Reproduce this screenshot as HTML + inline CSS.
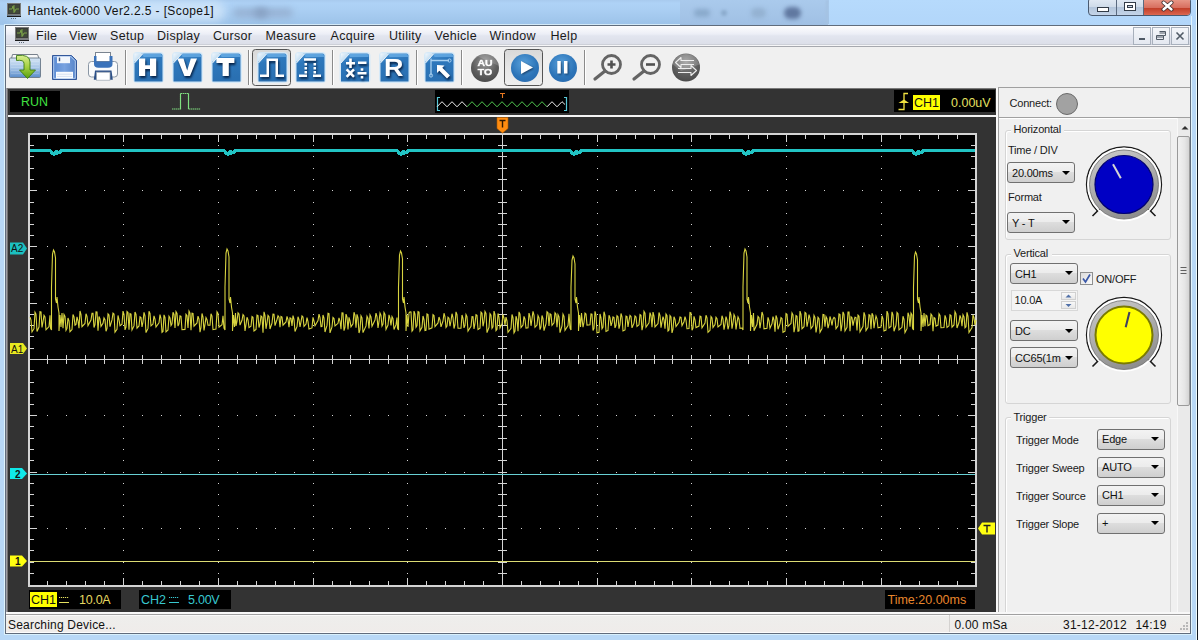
<!DOCTYPE html>
<html><head><meta charset="utf-8">
<style>
*{box-sizing:border-box}
html,body{margin:0;padding:0}
body{width:1198px;height:640px;overflow:hidden;position:relative;background:#bad3ec;font-family:"Liberation Sans",sans-serif;font-size:12px;color:#000}
.a{position:absolute}
.t{position:absolute;white-space:nowrap;line-height:1}
.m{position:absolute;white-space:nowrap;line-height:1;top:29.7px;font-size:12.5px;letter-spacing:0.3px;color:#1a1a1a}
.p{position:absolute;white-space:nowrap;line-height:1;font-size:11px;letter-spacing:-0.2px;color:#1a1a1a}
.cb{position:absolute;height:21px;border:1px solid #707070;border-radius:3px;background:linear-gradient(#f3f3f3,#ececec 45%,#dddddd 50%,#cfcfcf)}
.cb span{position:absolute;left:4px;top:4.3px;font-size:11px;letter-spacing:-0.2px;line-height:1;white-space:nowrap;color:#111}
.cb i{position:absolute;right:4.5px;top:7.5px;width:0;height:0;border-left:4px solid transparent;border-right:4px solid transparent;border-top:4.5px solid #000}
</style></head><body>
<!-- title bar background -->
<div class="a" style="left:0;top:0;width:1198px;height:640px;background:#b8d8f6"></div>
<div class="a" style="left:0;top:0;width:1198px;height:25px;background:linear-gradient(#a8caee 0px,#aed2f6 3px,#acd0f4 8px,#9ec4ea 23px)"></div>
<div class="a" style="left:4px;top:24px;width:1188px;height:1px;background:#d4eaf8"></div>
<div class="a" style="left:680px;top:0;width:148px;height:25px;background:linear-gradient(#aacaec,#a0c0e4)"></div>
<div class="a" style="left:826px;top:0;width:3px;height:25px;background:#a4c2e2;filter:blur(1px)"></div>
<div class="a" style="left:829px;top:0;width:369px;height:25px;background:linear-gradient(#b6dafc,#b2d6fa)"></div>
<div class="a" style="left:10px;top:1px;width:215px;height:21px;background:rgba(214,232,250,0.75);border-radius:10px;filter:blur(4px)"></div>
<div class="a" style="left:233px;top:8px;width:60px;height:10px;border-radius:5px;background:#98b4d6;filter:blur(3px)"></div>
<div class="a" style="left:254px;top:8px;width:14px;height:10px;border-radius:6px;background:#88a2c4;filter:blur(3px)"></div>
<div class="a" style="left:694px;top:9px;width:16px;height:8px;border-radius:4px;background:#8aaacc;filter:blur(2px)"></div>
<div class="a" style="left:721px;top:10px;width:6px;height:6px;border-radius:3px;background:#8aaacc;filter:blur(1.5px)"></div>
<div class="a" style="left:751px;top:8px;width:15px;height:10px;border-radius:5px;background:#94b2d2;filter:blur(2px)"></div>
<div class="a" style="left:784px;top:7px;width:17px;height:12px;border-radius:7px;background:#6078a0;filter:blur(2px)"></div>
<!-- outer frame edges -->
<div class="a" style="left:4px;top:25px;width:1px;height:610px;background:#e0f4fc"></div>
<div class="a" style="left:1191px;top:16px;width:1px;height:619px;background:#e0f4fc"></div>
<div class="a" style="left:1196px;top:0;width:1px;height:640px;background:#f0fcfc"></div>
<div class="a" style="left:1197px;top:0;width:1px;height:640px;background:#101820"></div>
<div class="a" style="left:4px;top:634px;width:1188px;height:1px;background:#d8f0fc"></div>
<div class="t" style="left:27.5px;top:4.6px;font-size:12px;letter-spacing:0.38px;color:#111">Hantek-6000 Ver2.2.5 - [Scope1]</div>
<svg class="a" style="left:7px;top:3px" width="15" height="17"><rect x="0.5" y="0.5" width="13" height="11" fill="#3a3c3a" stroke="#7a7c7a"/><rect x="2" y="2" width="10" height="8" fill="#404838"/><path d="M2,6H5L6,3L7.5,9L9,6H12M7,2V10" stroke="#7aa048" stroke-width="1" fill="none"/><rect x="0" y="12.5" width="14" height="1.5" fill="#1a1a1a"/><path d="M4,15.5h6" stroke="#5a6a7a" stroke-width="1" stroke-dasharray="1,1"/></svg>

<!-- window buttons -->
<div class="a" style="left:1088px;top:-3px;width:103px;height:19px;border:1px solid #4a5a70;border-radius:4px;overflow:hidden;background:linear-gradient(#e4ecf6,#d0dcea 50%,#b4c6dc 55%,#c4d4e8)">
 <div class="a" style="left:27px;top:0;width:1px;height:19px;background:#5a6a80"></div>
 <div class="a" style="left:54px;top:0;width:1px;height:19px;background:#5a6a80"></div>
 <div class="a" style="left:55px;top:0;width:47px;height:19px;background:linear-gradient(#eba090,#d87060 50%,#c2402a 55%,#d8604a 85%,#e88a70)"></div>
 <div class="a" style="left:8px;top:9px;width:12px;height:5px;border:1px solid #333c48;background:#fff"></div>
 <div class="a" style="left:35px;top:4px;width:12px;height:9px;border:1px solid #333c48;background:#fff"><div class="a" style="left:2px;top:2px;width:6px;height:3px;border:1px solid #333c48;background:#c8d4e4"></div></div>
 <svg class="a" style="left:55px;top:0" width="47" height="19"><path d="M19.5,4.5L27.5,11.5M27.5,4.5L19.5,11.5" stroke="#3a2a2a" stroke-width="4" stroke-linecap="round"/><path d="M19.5,4.5L27.5,11.5M27.5,4.5L19.5,11.5" stroke="#fff" stroke-width="2.4" stroke-linecap="round"/></svg>
</div>

<!-- inner frame -->
<div class="a" style="left:5px;top:25px;width:1186px;height:609px;border:1px solid #606c7c;background:#f0f0f0"></div>
<!-- menu bar -->
<div class="a" style="left:6px;top:26px;width:1184px;height:18px;background:linear-gradient(#fdfdfe,#eceef6 45%,#e2e5ef 55%,#dcdfe9)"></div>
<div class="a" style="left:6px;top:44px;width:1184px;height:1px;background:#cdd0d8"></div>
<div class="a" style="left:6px;top:45px;width:1184px;height:1px;background:#f6f6f8"></div>
<div class="a" style="left:6px;top:46px;width:1184px;height:1px;background:#a6a8ae"></div>
<svg class="a" style="left:14.5px;top:27px" width="15" height="17"><rect x="0.5" y="0.5" width="13" height="11" fill="#3a3c3a" stroke="#7a7c7a"/><rect x="2" y="2" width="10" height="8" fill="#404838"/><path d="M2,6H5L6,3L7.5,9L9,6H12M7,2V10" stroke="#7aa048" stroke-width="1" fill="none"/><rect x="0" y="12.5" width="14" height="1.5" fill="#1a1a1a"/><path d="M4,15.5h6" stroke="#5a6a7a" stroke-width="1" stroke-dasharray="1,1"/></svg>

<div class="m" style="left:36px">File</div>
<div class="m" style="left:69px">View</div>
<div class="m" style="left:110px">Setup</div>
<div class="m" style="left:157px">Display</div>
<div class="m" style="left:213px">Cursor</div>
<div class="m" style="left:265.5px">Measure</div>
<div class="m" style="left:330.5px">Acquire</div>
<div class="m" style="left:389px">Utility</div>
<div class="m" style="left:434.5px">Vehicle</div>
<div class="m" style="left:489.5px">Window</div>
<div class="m" style="left:550.5px">Help</div>
<!-- MDI buttons -->
<div class="a" style="left:1133px;top:27px;width:18px;height:18px;border:1px solid #a8b0bc;background:linear-gradient(#f4f6fa,#e4e8f0)"><div class="a" style="left:5px;top:10px;width:6px;height:2px;background:#505a66"></div></div>
<div class="a" style="left:1152px;top:27px;width:18px;height:18px;border:1px solid #a8b0bc;background:linear-gradient(#f4f6fa,#e4e8f0)"><svg class="a" style="left:0;top:0" width="16" height="16"><path d="M6.5,3.5h6v4h-2M6.5,5h6M3.5,7.5h7v4h-7zM3.5,9h7" stroke="#505a66" stroke-width="1" fill="none"/></svg></div>
<div class="a" style="left:1171px;top:27px;width:18px;height:18px;border:1px solid #a8b0bc;background:linear-gradient(#f4f6fa,#e4e8f0)"><svg class="a" style="left:0;top:0" width="16" height="16"><path d="M4.5,4.5l7,7M11.5,4.5l-7,7" stroke="#505a66" stroke-width="1.6" fill="none"/></svg></div>

<!-- toolbar -->
<div class="a" style="left:6px;top:47px;width:1184px;height:41px;background:#f0f0f0"></div>
<svg class="a" style="left:0;top:0" width="720" height="90">
<defs>
<linearGradient id="tg" x1="0" y1="0" x2="0.25" y2="1"><stop offset="0" stop-color="#4f98d8"/><stop offset="0.35" stop-color="#2e78bc"/><stop offset="1" stop-color="#2a70b2"/></linearGradient>
<linearGradient id="tgl" x1="0" y1="0" x2="0.6" y2="0.6"><stop offset="0" stop-color="#f4f8fc"/><stop offset="1" stop-color="#b8d8f0"/></linearGradient>
<radialGradient id="cg" cx="0.45" cy="0.35" r="0.7"><stop offset="0" stop-color="#5aa2dc"/><stop offset="0.7" stop-color="#2c74b8"/><stop offset="1" stop-color="#2a6cb0"/></radialGradient>
<radialGradient id="gg" cx="0.5" cy="0.3" r="0.75"><stop offset="0" stop-color="#9a9a9a"/><stop offset="0.6" stop-color="#5e5e5e"/><stop offset="1" stop-color="#484848"/></radialGradient>
<linearGradient id="pb" x1="0" y1="0" x2="0" y2="1"><stop offset="0" stop-color="#d8d8d8"/><stop offset="0.5" stop-color="#e6e6e6"/><stop offset="1" stop-color="#efefef"/></linearGradient>
<linearGradient id="flp" x1="0" y1="0" x2="1" y2="0"><stop offset="0" stop-color="#5a8ad2"/><stop offset="0.5" stop-color="#78a2e0"/><stop offset="1" stop-color="#5684c8"/></linearGradient>
<linearGradient id="fold" x1="0" y1="0" x2="0" y2="1"><stop offset="0" stop-color="#d4e4f4"/><stop offset="0.5" stop-color="#a8c6e8"/><stop offset="1" stop-color="#5a8cca"/></linearGradient>
<linearGradient id="arr" x1="0" y1="0" x2="0" y2="1"><stop offset="0" stop-color="#d8ee90"/><stop offset="0.5" stop-color="#a4d040"/><stop offset="1" stop-color="#58a010"/></linearGradient>
<g id="tile">
<rect x="-1.5" y="-1.5" width="31" height="31" rx="4" fill="#d2e8f8" opacity="0.9"/>
<path d="M7,0H26Q28,0 28,2V28H0V8Z" fill="url(#tg)"/>
<path d="M8,0.5H26Q27.5,0.5 27.5,2V3.5H9Z" fill="#6cb0e8" opacity="0.7"/>
<path d="M0,0H8.5L0,9.5Z" fill="url(#tgl)"/>
<path d="M0,9.5L8.5,0" stroke="#ffffff" stroke-width="1" opacity="0.8"/>
</g>
</defs>
<!-- separators -->
<path d="M125.5,50V85M248.5,50V85M332.5,50V85M416.5,50V85M461.5,50V85M584.5,50V85" stroke="#8a8a8a" stroke-width="1"/>
<path d="M126.5,50V85M249.5,50V85M333.5,50V85M417.5,50V85M462.5,50V85M585.5,50V85" stroke="#ffffff" stroke-width="1"/>
<!-- pressed buttons -->
<rect x="252.5" y="49.5" width="38" height="36" rx="3" fill="url(#pb)" stroke="#555" stroke-width="1"/>
<rect x="504.5" y="49.5" width="38" height="36" rx="3" fill="url(#pb)" stroke="#555" stroke-width="1"/>
<!-- open folder -->
<path d="M11.5,58.5L12.5,54.5H37.5L39,58.5Z" fill="#f8f8f8" stroke="#6a7480" stroke-width="0.9"/>
<rect x="9.5" y="58" width="31" height="19.5" rx="1" fill="url(#fold)" stroke="#6a7888" stroke-width="0.9"/>
<path d="M11,61.5H39M11,64.5H39M11,67.5H39M11,70.5H39M11,73.5H39" stroke="#ffffff" stroke-width="0.5" opacity="0.3"/>
<path d="M16.5,55.5Q30,54 30,62V70H35.5L27.5,78.5L19.5,70H24V63.5Q24,59.5 16.5,60.5Z" fill="url(#arr)" stroke="#3c7c12" stroke-width="0.9" stroke-linejoin="round"/>
<!-- floppy -->
<path d="M52.5,55.5H71.5L76.5,60.5V79.5H52.5Z" fill="url(#flp)" stroke="#34589a" stroke-width="1"/>
<path d="M53.7,56.7H71L75.3,61V78.3H53.7Z" fill="none" stroke="#c4d8f2" stroke-width="0.8"/>
<rect x="57" y="56.6" width="13" height="6.6" fill="#f2f6fc"/>
<rect x="58.8" y="57.6" width="1.4" height="3.6" fill="#40587a"/>
<rect x="56" y="71.8" width="17" height="6.6" fill="#fafcfe"/>
<path d="M57,74.2H72M57,76.4H72" stroke="#c0d0ea" stroke-width="0.6"/>
<!-- printer -->
<rect x="88.5" y="61.5" width="29" height="15.5" rx="3" fill="#fafbfc" stroke="#8a96a4" stroke-width="1"/>
<rect x="95.5" y="52.5" width="15" height="9" fill="#ffffff" stroke="#7a8490" stroke-width="1"/>
<path d="M94,56H96.5V61.5H109.5V56H112.5V64Q112.5,67.8 108,67.8H98.5Q94,67.8 94,64Z" fill="#3a72ba"/>
<path d="M95,70.5H111.5L112.8,79.8H93.8Z" fill="#2c5088"/>
<rect x="96.5" y="72.2" width="13.5" height="8" fill="#ffffff" stroke="#9aa4b0" stroke-width="0.7"/>
<!-- tiles -->
<use href="#tile" x="134.5" y="53.5"/>
<use href="#tile" x="173.5" y="53.5"/>
<use href="#tile" x="212.5" y="53.5"/>
<use href="#tile" x="258.5" y="53.5"/>
<use href="#tile" x="296.5" y="53.5"/>
<use href="#tile" x="341" y="53.5"/>
<use href="#tile" x="380.5" y="53.5"/>
<use href="#tile" x="425.5" y="53.5"/>
<g fill="#ffffff" style="filter:drop-shadow(1.5px 2px 1.2px rgba(0,20,50,0.85))">
<path d="M139,58.4H145.2V65.2H150V58.4H156.2V75.9H150V69.1H145.2V75.9H139Z"/>
<path d="M177.3,58.4H183.5L187.2,70.5L190.8,58.4H197L190,75.9H184.4Z"/>
<path d="M216.4,58H234.4V63H228.8V76H222.6V63H216.4Z"/>
<text x="0" y="0" transform="translate(384,76.3) scale(1.1,1)" font-family="Liberation Sans" font-weight="bold" font-size="24.5">R</text>
<path d="M260,74.5H266.5V58.5H278V74.5H284V77H275.5V61H269V77H260Z"/>
<path d="M304,58.3H316V60.8H304Z M304.5,63h2.5v2.5h-2.5z M304.5,67h2.5v2.5h-2.5z M304.5,71h2.5v2.5h-2.5z M313.5,63h2.5v2.5h-2.5z M313.5,67h2.5v2.5h-2.5z M313.5,71h2.5v2.5h-2.5z M299,74.5H307V77H299Z M313,74.5H321V77H313Z"/>
<path d="M346,62h9v2.6h-9z M349.2,58.6h2.6v9.4h-2.6z M358,61.5h8.5v2.6H358z M345.7,70.3l1.8-1.8l2.8,2.8l2.8-2.8l1.8,1.8l-2.8,2.8l2.8,2.8l-1.8,1.8l-2.8-2.8l-2.8,2.8l-1.8-1.8l2.8-2.8z M357.5,72h9v2.4h-9z M360.7,68.3h2.6v2.4h-2.6z M360.7,76h2.6v2.4h-2.6z"/>
<path d="M437,65L444.5,65.5L442.3,67.8L450,75.5L447,78.5L439.3,70.8L437,73Z"/>
</g>
<path d="M431,58.5V75.5M431,60.5H449" stroke="#a8d0f0" stroke-width="1.3" fill="none"/>
<circle cx="431" cy="75.5" r="1.6" fill="none" stroke="#a8d0f0" stroke-width="1"/>
<circle cx="449.5" cy="60.5" r="1.6" fill="none" stroke="#a8d0f0" stroke-width="1"/>
<!-- circles -->
<circle cx="485" cy="68" r="14" fill="url(#gg)"/>
<path d="M471.5,63A14,14 0 0 1 499,66L478,56.5Z" fill="#ffffff" opacity="0.15"/>
<g fill="#ffffff" stroke="#ffffff" stroke-width="0.6" font-family="Liberation Sans" font-weight="700" font-size="10.5" text-anchor="middle" style="filter:drop-shadow(0.6px 0.8px 0.5px rgba(0,0,0,0.6))"><text x="485" y="0" transform="translate(0,65.6) scale(1,0.9)">AU</text><text x="485" y="0" transform="translate(0,75) scale(1,0.9)">TO</text></g>
<circle cx="525" cy="68" r="14" fill="url(#cg)"/>
<circle cx="563" cy="68" r="14" fill="url(#cg)"/>
<g fill="#ffffff" style="filter:drop-shadow(1px 1.2px 0.8px rgba(0,25,60,0.7))">
<path d="M521,61L533,67.5L521,74Z"/>
<rect x="557.3" y="61" width="3.5" height="12.5"/><rect x="564" y="61" width="3.5" height="12.5"/>
</g>
<!-- zoom -->
<g fill="none" stroke="#646464">
<circle cx="611.5" cy="64.5" r="9" stroke-width="2.8"/>
<path d="M605,71L595,79" stroke-width="3.2" stroke-linecap="round"/>
<circle cx="650.5" cy="64.5" r="9" stroke-width="2.8"/>
<path d="M644,71L634,79" stroke-width="3.2" stroke-linecap="round"/>
</g>
<path d="M607.5,64.5h8M611.5,60.5v8" stroke="#505050" stroke-width="2.6"/>
<path d="M646,64.5h9" stroke="#505050" stroke-width="2.6"/>
<!-- swap -->
<circle cx="686" cy="67.5" r="14" fill="url(#gg)"/>
<path d="M672.5,64A14,14 0 0 1 699.5,64.5L681,71Z" fill="#ffffff" opacity="0.18"/>
<g fill="none" stroke="#eeeeee" stroke-width="1.1" stroke-linejoin="round">
<path d="M694,60.5H681V57.5L675.5,62.5L681,67.5V64.5H694"/>
<path d="M678,68.5H691V65.5L696.5,70.5L691,75.5V72.5H678"/>
</g>
</svg>


<!-- scope panel -->
<div class="a" style="left:6px;top:88px;width:990px;height:524px;background:#333333"></div>
<div class="a" style="left:6px;top:88px;width:990px;height:1px;background:#7a7a7a"></div>
<div class="a" style="left:6px;top:88px;width:1px;height:524px;background:#a0a0a8"></div>
<div class="a" style="left:7px;top:88px;width:1px;height:524px;background:#747474"></div>
<div class="a" style="left:10px;top:91px;width:50px;height:21px;background:#000"></div>
<div class="t" style="left:21px;top:96.4px;font-size:12.5px;color:#40e040">RUN</div>
<svg class="a" style="left:0;top:80px" width="600" height="40">
<path d="M172,29H180.5M188.5,29H200.6M180.5,29.5V13.5H188.5V29.5" stroke="#80e080" stroke-width="1.1" fill="none" stroke-dasharray="1.5,0.5"/><path d="M180.5,29V13.5M188.5,13.5V29" stroke="#80e080" stroke-width="1.1" fill="none"/>
<rect x="435" y="10" width="134" height="23" fill="#000"/>
<path d="M440,17.5H437.5V30.5H440M564,17.5H566.5V30.5H564" stroke="#58c8d8" stroke-width="1.2" fill="none"/>
<path d="M437.0,26.8 L442.0,21.7 L447.0,26.8 L452.0,21.7 L457.0,26.8 L462.0,21.7 L467.0,26.8" stroke="#f0f0f0" stroke-width="1" fill="none"/>
<path d="M467.0,26.8 L472.0,21.7 L477.0,26.8 L482.0,21.7 L487.0,26.8 L492.0,21.7 L497.0,26.8 L502.0,21.7 L507.0,26.8 L512.0,21.7 L517.0,26.8 L522.0,21.7 L527.0,26.8 L532.0,21.7 L537.0,26.8 L542.0,21.7 L547.0,26.8" stroke="#50c850" stroke-width="1" fill="none"/>
<path d="M547.0,26.8 L552.0,21.7 L557.0,26.8 L562.0,21.7L565,24.5" stroke="#f0f0f0" stroke-width="1" fill="none"/>
<path d="M500,13.5h5M502.5,13.5v4.5" stroke="#e87820" stroke-width="1.1" fill="none"/>
</svg>
<div class="a" style="left:894px;top:90px;width:101px;height:22px;background:#000"></div>
<svg class="a" style="left:894px;top:90px" width="20" height="22"><path d="M4.5,19.5H10V3.5H14" stroke="#f0e040" stroke-width="1.3" fill="none"/><path d="M4.5,13L10,9.5L15,13Z" fill="#f0e040"/></svg>
<div class="a" style="left:913px;top:95px;width:27px;height:15px;background:#ffff00"></div>
<div class="t" style="left:914px;top:96.5px;font-size:12.5px;color:#111">CH1</div>
<div class="t" style="left:951px;top:96.5px;font-size:12.5px;color:#e4e060">0.00uV</div>
<div class="a" style="left:8px;top:115px;width:988px;height:2px;background:#f4f4f4"></div>

<svg class="a" style="left:0;top:0" width="1000" height="640">
<rect x="30" y="135" width="945" height="450" fill="#000"/>
<path d="M47,190h1v1h-1zM47,246h1v1h-1zM47,303h1v1h-1zM47,415h1v1h-1zM47,472h1v1h-1zM47,528h1v1h-1zM66,190h1v1h-1zM66,246h1v1h-1zM66,303h1v1h-1zM66,415h1v1h-1zM66,472h1v1h-1zM66,528h1v1h-1zM85,190h1v1h-1zM85,246h1v1h-1zM85,303h1v1h-1zM85,415h1v1h-1zM85,472h1v1h-1zM85,528h1v1h-1zM104,190h1v1h-1zM104,246h1v1h-1zM104,303h1v1h-1zM104,415h1v1h-1zM104,472h1v1h-1zM104,528h1v1h-1zM123,145h1v1h-1zM123,156h1v1h-1zM123,168h1v1h-1zM123,179h1v1h-1zM123,190h1v1h-1zM123,202h1v1h-1zM123,213h1v1h-1zM123,224h1v1h-1zM123,235h1v1h-1zM123,246h1v1h-1zM123,258h1v1h-1zM123,269h1v1h-1zM123,280h1v1h-1zM123,292h1v1h-1zM123,303h1v1h-1zM123,314h1v1h-1zM123,325h1v1h-1zM123,336h1v1h-1zM123,348h1v1h-1zM123,370h1v1h-1zM123,382h1v1h-1zM123,393h1v1h-1zM123,404h1v1h-1zM123,415h1v1h-1zM123,426h1v1h-1zM123,438h1v1h-1zM123,449h1v1h-1zM123,460h1v1h-1zM123,472h1v1h-1zM123,483h1v1h-1zM123,494h1v1h-1zM123,505h1v1h-1zM123,516h1v1h-1zM123,528h1v1h-1zM123,539h1v1h-1zM123,550h1v1h-1zM123,562h1v1h-1zM123,573h1v1h-1zM142,190h1v1h-1zM142,246h1v1h-1zM142,303h1v1h-1zM142,415h1v1h-1zM142,472h1v1h-1zM142,528h1v1h-1zM161,190h1v1h-1zM161,246h1v1h-1zM161,303h1v1h-1zM161,415h1v1h-1zM161,472h1v1h-1zM161,528h1v1h-1zM180,190h1v1h-1zM180,246h1v1h-1zM180,303h1v1h-1zM180,415h1v1h-1zM180,472h1v1h-1zM180,528h1v1h-1zM199,190h1v1h-1zM199,246h1v1h-1zM199,303h1v1h-1zM199,415h1v1h-1zM199,472h1v1h-1zM199,528h1v1h-1zM218,145h1v1h-1zM218,156h1v1h-1zM218,168h1v1h-1zM218,179h1v1h-1zM218,190h1v1h-1zM218,202h1v1h-1zM218,213h1v1h-1zM218,224h1v1h-1zM218,235h1v1h-1zM218,246h1v1h-1zM218,258h1v1h-1zM218,269h1v1h-1zM218,280h1v1h-1zM218,292h1v1h-1zM218,303h1v1h-1zM218,314h1v1h-1zM218,325h1v1h-1zM218,336h1v1h-1zM218,348h1v1h-1zM218,370h1v1h-1zM218,382h1v1h-1zM218,393h1v1h-1zM218,404h1v1h-1zM218,415h1v1h-1zM218,426h1v1h-1zM218,438h1v1h-1zM218,449h1v1h-1zM218,460h1v1h-1zM218,472h1v1h-1zM218,483h1v1h-1zM218,494h1v1h-1zM218,505h1v1h-1zM218,516h1v1h-1zM218,528h1v1h-1zM218,539h1v1h-1zM218,550h1v1h-1zM218,562h1v1h-1zM218,573h1v1h-1zM237,190h1v1h-1zM237,246h1v1h-1zM237,303h1v1h-1zM237,415h1v1h-1zM237,472h1v1h-1zM237,528h1v1h-1zM256,190h1v1h-1zM256,246h1v1h-1zM256,303h1v1h-1zM256,415h1v1h-1zM256,472h1v1h-1zM256,528h1v1h-1zM275,190h1v1h-1zM275,246h1v1h-1zM275,303h1v1h-1zM275,415h1v1h-1zM275,472h1v1h-1zM275,528h1v1h-1zM294,190h1v1h-1zM294,246h1v1h-1zM294,303h1v1h-1zM294,415h1v1h-1zM294,472h1v1h-1zM294,528h1v1h-1zM313,145h1v1h-1zM313,156h1v1h-1zM313,168h1v1h-1zM313,179h1v1h-1zM313,190h1v1h-1zM313,202h1v1h-1zM313,213h1v1h-1zM313,224h1v1h-1zM313,235h1v1h-1zM313,246h1v1h-1zM313,258h1v1h-1zM313,269h1v1h-1zM313,280h1v1h-1zM313,292h1v1h-1zM313,303h1v1h-1zM313,314h1v1h-1zM313,325h1v1h-1zM313,336h1v1h-1zM313,348h1v1h-1zM313,370h1v1h-1zM313,382h1v1h-1zM313,393h1v1h-1zM313,404h1v1h-1zM313,415h1v1h-1zM313,426h1v1h-1zM313,438h1v1h-1zM313,449h1v1h-1zM313,460h1v1h-1zM313,472h1v1h-1zM313,483h1v1h-1zM313,494h1v1h-1zM313,505h1v1h-1zM313,516h1v1h-1zM313,528h1v1h-1zM313,539h1v1h-1zM313,550h1v1h-1zM313,562h1v1h-1zM313,573h1v1h-1zM332,190h1v1h-1zM332,246h1v1h-1zM332,303h1v1h-1zM332,415h1v1h-1zM332,472h1v1h-1zM332,528h1v1h-1zM350,190h1v1h-1zM350,246h1v1h-1zM350,303h1v1h-1zM350,415h1v1h-1zM350,472h1v1h-1zM350,528h1v1h-1zM369,190h1v1h-1zM369,246h1v1h-1zM369,303h1v1h-1zM369,415h1v1h-1zM369,472h1v1h-1zM369,528h1v1h-1zM388,190h1v1h-1zM388,246h1v1h-1zM388,303h1v1h-1zM388,415h1v1h-1zM388,472h1v1h-1zM388,528h1v1h-1zM407,145h1v1h-1zM407,156h1v1h-1zM407,168h1v1h-1zM407,179h1v1h-1zM407,190h1v1h-1zM407,202h1v1h-1zM407,213h1v1h-1zM407,224h1v1h-1zM407,235h1v1h-1zM407,246h1v1h-1zM407,258h1v1h-1zM407,269h1v1h-1zM407,280h1v1h-1zM407,292h1v1h-1zM407,303h1v1h-1zM407,314h1v1h-1zM407,325h1v1h-1zM407,336h1v1h-1zM407,348h1v1h-1zM407,370h1v1h-1zM407,382h1v1h-1zM407,393h1v1h-1zM407,404h1v1h-1zM407,415h1v1h-1zM407,426h1v1h-1zM407,438h1v1h-1zM407,449h1v1h-1zM407,460h1v1h-1zM407,472h1v1h-1zM407,483h1v1h-1zM407,494h1v1h-1zM407,505h1v1h-1zM407,516h1v1h-1zM407,528h1v1h-1zM407,539h1v1h-1zM407,550h1v1h-1zM407,562h1v1h-1zM407,573h1v1h-1zM426,190h1v1h-1zM426,246h1v1h-1zM426,303h1v1h-1zM426,415h1v1h-1zM426,472h1v1h-1zM426,528h1v1h-1zM445,190h1v1h-1zM445,246h1v1h-1zM445,303h1v1h-1zM445,415h1v1h-1zM445,472h1v1h-1zM445,528h1v1h-1zM464,190h1v1h-1zM464,246h1v1h-1zM464,303h1v1h-1zM464,415h1v1h-1zM464,472h1v1h-1zM464,528h1v1h-1zM483,190h1v1h-1zM483,246h1v1h-1zM483,303h1v1h-1zM483,415h1v1h-1zM483,472h1v1h-1zM483,528h1v1h-1zM502,190h1v1h-1zM502,246h1v1h-1zM502,303h1v1h-1zM502,415h1v1h-1zM502,472h1v1h-1zM502,528h1v1h-1zM521,190h1v1h-1zM521,246h1v1h-1zM521,303h1v1h-1zM521,415h1v1h-1zM521,472h1v1h-1zM521,528h1v1h-1zM540,190h1v1h-1zM540,246h1v1h-1zM540,303h1v1h-1zM540,415h1v1h-1zM540,472h1v1h-1zM540,528h1v1h-1zM559,190h1v1h-1zM559,246h1v1h-1zM559,303h1v1h-1zM559,415h1v1h-1zM559,472h1v1h-1zM559,528h1v1h-1zM578,190h1v1h-1zM578,246h1v1h-1zM578,303h1v1h-1zM578,415h1v1h-1zM578,472h1v1h-1zM578,528h1v1h-1zM597,145h1v1h-1zM597,156h1v1h-1zM597,168h1v1h-1zM597,179h1v1h-1zM597,190h1v1h-1zM597,202h1v1h-1zM597,213h1v1h-1zM597,224h1v1h-1zM597,235h1v1h-1zM597,246h1v1h-1zM597,258h1v1h-1zM597,269h1v1h-1zM597,280h1v1h-1zM597,292h1v1h-1zM597,303h1v1h-1zM597,314h1v1h-1zM597,325h1v1h-1zM597,336h1v1h-1zM597,348h1v1h-1zM597,370h1v1h-1zM597,382h1v1h-1zM597,393h1v1h-1zM597,404h1v1h-1zM597,415h1v1h-1zM597,426h1v1h-1zM597,438h1v1h-1zM597,449h1v1h-1zM597,460h1v1h-1zM597,472h1v1h-1zM597,483h1v1h-1zM597,494h1v1h-1zM597,505h1v1h-1zM597,516h1v1h-1zM597,528h1v1h-1zM597,539h1v1h-1zM597,550h1v1h-1zM597,562h1v1h-1zM597,573h1v1h-1zM616,190h1v1h-1zM616,246h1v1h-1zM616,303h1v1h-1zM616,415h1v1h-1zM616,472h1v1h-1zM616,528h1v1h-1zM635,190h1v1h-1zM635,246h1v1h-1zM635,303h1v1h-1zM635,415h1v1h-1zM635,472h1v1h-1zM635,528h1v1h-1zM654,190h1v1h-1zM654,246h1v1h-1zM654,303h1v1h-1zM654,415h1v1h-1zM654,472h1v1h-1zM654,528h1v1h-1zM672,190h1v1h-1zM672,246h1v1h-1zM672,303h1v1h-1zM672,415h1v1h-1zM672,472h1v1h-1zM672,528h1v1h-1zM691,145h1v1h-1zM691,156h1v1h-1zM691,168h1v1h-1zM691,179h1v1h-1zM691,190h1v1h-1zM691,202h1v1h-1zM691,213h1v1h-1zM691,224h1v1h-1zM691,235h1v1h-1zM691,246h1v1h-1zM691,258h1v1h-1zM691,269h1v1h-1zM691,280h1v1h-1zM691,292h1v1h-1zM691,303h1v1h-1zM691,314h1v1h-1zM691,325h1v1h-1zM691,336h1v1h-1zM691,348h1v1h-1zM691,370h1v1h-1zM691,382h1v1h-1zM691,393h1v1h-1zM691,404h1v1h-1zM691,415h1v1h-1zM691,426h1v1h-1zM691,438h1v1h-1zM691,449h1v1h-1zM691,460h1v1h-1zM691,472h1v1h-1zM691,483h1v1h-1zM691,494h1v1h-1zM691,505h1v1h-1zM691,516h1v1h-1zM691,528h1v1h-1zM691,539h1v1h-1zM691,550h1v1h-1zM691,562h1v1h-1zM691,573h1v1h-1zM710,190h1v1h-1zM710,246h1v1h-1zM710,303h1v1h-1zM710,415h1v1h-1zM710,472h1v1h-1zM710,528h1v1h-1zM729,190h1v1h-1zM729,246h1v1h-1zM729,303h1v1h-1zM729,415h1v1h-1zM729,472h1v1h-1zM729,528h1v1h-1zM748,190h1v1h-1zM748,246h1v1h-1zM748,303h1v1h-1zM748,415h1v1h-1zM748,472h1v1h-1zM748,528h1v1h-1zM767,190h1v1h-1zM767,246h1v1h-1zM767,303h1v1h-1zM767,415h1v1h-1zM767,472h1v1h-1zM767,528h1v1h-1zM786,145h1v1h-1zM786,156h1v1h-1zM786,168h1v1h-1zM786,179h1v1h-1zM786,190h1v1h-1zM786,202h1v1h-1zM786,213h1v1h-1zM786,224h1v1h-1zM786,235h1v1h-1zM786,246h1v1h-1zM786,258h1v1h-1zM786,269h1v1h-1zM786,280h1v1h-1zM786,292h1v1h-1zM786,303h1v1h-1zM786,314h1v1h-1zM786,325h1v1h-1zM786,336h1v1h-1zM786,348h1v1h-1zM786,370h1v1h-1zM786,382h1v1h-1zM786,393h1v1h-1zM786,404h1v1h-1zM786,415h1v1h-1zM786,426h1v1h-1zM786,438h1v1h-1zM786,449h1v1h-1zM786,460h1v1h-1zM786,472h1v1h-1zM786,483h1v1h-1zM786,494h1v1h-1zM786,505h1v1h-1zM786,516h1v1h-1zM786,528h1v1h-1zM786,539h1v1h-1zM786,550h1v1h-1zM786,562h1v1h-1zM786,573h1v1h-1zM805,190h1v1h-1zM805,246h1v1h-1zM805,303h1v1h-1zM805,415h1v1h-1zM805,472h1v1h-1zM805,528h1v1h-1zM824,190h1v1h-1zM824,246h1v1h-1zM824,303h1v1h-1zM824,415h1v1h-1zM824,472h1v1h-1zM824,528h1v1h-1zM843,190h1v1h-1zM843,246h1v1h-1zM843,303h1v1h-1zM843,415h1v1h-1zM843,472h1v1h-1zM843,528h1v1h-1zM862,190h1v1h-1zM862,246h1v1h-1zM862,303h1v1h-1zM862,415h1v1h-1zM862,472h1v1h-1zM862,528h1v1h-1zM881,145h1v1h-1zM881,156h1v1h-1zM881,168h1v1h-1zM881,179h1v1h-1zM881,190h1v1h-1zM881,202h1v1h-1zM881,213h1v1h-1zM881,224h1v1h-1zM881,235h1v1h-1zM881,246h1v1h-1zM881,258h1v1h-1zM881,269h1v1h-1zM881,280h1v1h-1zM881,292h1v1h-1zM881,303h1v1h-1zM881,314h1v1h-1zM881,325h1v1h-1zM881,336h1v1h-1zM881,348h1v1h-1zM881,370h1v1h-1zM881,382h1v1h-1zM881,393h1v1h-1zM881,404h1v1h-1zM881,415h1v1h-1zM881,426h1v1h-1zM881,438h1v1h-1zM881,449h1v1h-1zM881,460h1v1h-1zM881,472h1v1h-1zM881,483h1v1h-1zM881,494h1v1h-1zM881,505h1v1h-1zM881,516h1v1h-1zM881,528h1v1h-1zM881,539h1v1h-1zM881,550h1v1h-1zM881,562h1v1h-1zM881,573h1v1h-1zM900,190h1v1h-1zM900,246h1v1h-1zM900,303h1v1h-1zM900,415h1v1h-1zM900,472h1v1h-1zM900,528h1v1h-1zM919,190h1v1h-1zM919,246h1v1h-1zM919,303h1v1h-1zM919,415h1v1h-1zM919,472h1v1h-1zM919,528h1v1h-1zM938,190h1v1h-1zM938,246h1v1h-1zM938,303h1v1h-1zM938,415h1v1h-1zM938,472h1v1h-1zM938,528h1v1h-1zM957,190h1v1h-1zM957,246h1v1h-1zM957,303h1v1h-1zM957,415h1v1h-1zM957,472h1v1h-1zM957,528h1v1h-1z" fill="#d4d4d4"/>
<path d="M47.5,135v4M47.5,585v-4M47.5,355v9M66.5,135v4M66.5,585v-4M66.5,355v9M85.5,135v4M85.5,585v-4M85.5,355v9M104.5,135v4M104.5,585v-4M104.5,355v9M123.5,135v7M123.5,585v-7M123.5,355v9M142.5,135v4M142.5,585v-4M142.5,355v9M161.5,135v4M161.5,585v-4M161.5,355v9M180.5,135v4M180.5,585v-4M180.5,355v9M199.5,135v4M199.5,585v-4M199.5,355v9M218.5,135v7M218.5,585v-7M218.5,355v9M237.5,135v4M237.5,585v-4M237.5,355v9M256.5,135v4M256.5,585v-4M256.5,355v9M275.5,135v4M275.5,585v-4M275.5,355v9M294.5,135v4M294.5,585v-4M294.5,355v9M313.5,135v7M313.5,585v-7M313.5,355v9M332.5,135v4M332.5,585v-4M332.5,355v9M350.5,135v4M350.5,585v-4M350.5,355v9M369.5,135v4M369.5,585v-4M369.5,355v9M388.5,135v4M388.5,585v-4M388.5,355v9M407.5,135v7M407.5,585v-7M407.5,355v9M426.5,135v4M426.5,585v-4M426.5,355v9M445.5,135v4M445.5,585v-4M445.5,355v9M464.5,135v4M464.5,585v-4M464.5,355v9M483.5,135v4M483.5,585v-4M483.5,355v9M502.5,135v7M502.5,585v-7M521.5,135v4M521.5,585v-4M521.5,355v9M540.5,135v4M540.5,585v-4M540.5,355v9M559.5,135v4M559.5,585v-4M559.5,355v9M578.5,135v4M578.5,585v-4M578.5,355v9M597.5,135v7M597.5,585v-7M597.5,355v9M616.5,135v4M616.5,585v-4M616.5,355v9M635.5,135v4M635.5,585v-4M635.5,355v9M654.5,135v4M654.5,585v-4M654.5,355v9M672.5,135v4M672.5,585v-4M672.5,355v9M691.5,135v7M691.5,585v-7M691.5,355v9M710.5,135v4M710.5,585v-4M710.5,355v9M729.5,135v4M729.5,585v-4M729.5,355v9M748.5,135v4M748.5,585v-4M748.5,355v9M767.5,135v4M767.5,585v-4M767.5,355v9M786.5,135v7M786.5,585v-7M786.5,355v9M805.5,135v4M805.5,585v-4M805.5,355v9M824.5,135v4M824.5,585v-4M824.5,355v9M843.5,135v4M843.5,585v-4M843.5,355v9M862.5,135v4M862.5,585v-4M862.5,355v9M881.5,135v7M881.5,585v-7M881.5,355v9M900.5,135v4M900.5,585v-4M900.5,355v9M919.5,135v4M919.5,585v-4M919.5,355v9M938.5,135v4M938.5,585v-4M938.5,355v9M957.5,135v4M957.5,585v-4M957.5,355v9M30,145.5h4M975,145.5h-4M498,145.5h9M30,156.5h4M975,156.5h-4M498,156.5h9M30,168.5h4M975,168.5h-4M498,168.5h9M30,179.5h4M975,179.5h-4M498,179.5h9M30,190.5h7M975,190.5h-7M498,190.5h9M30,202.5h4M975,202.5h-4M498,202.5h9M30,213.5h4M975,213.5h-4M498,213.5h9M30,224.5h4M975,224.5h-4M498,224.5h9M30,235.5h4M975,235.5h-4M498,235.5h9M30,246.5h7M975,246.5h-7M498,246.5h9M30,258.5h4M975,258.5h-4M498,258.5h9M30,269.5h4M975,269.5h-4M498,269.5h9M30,280.5h4M975,280.5h-4M498,280.5h9M30,292.5h4M975,292.5h-4M498,292.5h9M30,303.5h7M975,303.5h-7M498,303.5h9M30,314.5h4M975,314.5h-4M498,314.5h9M30,325.5h4M975,325.5h-4M498,325.5h9M30,336.5h4M975,336.5h-4M498,336.5h9M30,348.5h4M975,348.5h-4M498,348.5h9M30,359.5h7M975,359.5h-7M30,370.5h4M975,370.5h-4M498,370.5h9M30,382.5h4M975,382.5h-4M498,382.5h9M30,393.5h4M975,393.5h-4M498,393.5h9M30,404.5h4M975,404.5h-4M498,404.5h9M30,415.5h7M975,415.5h-7M498,415.5h9M30,426.5h4M975,426.5h-4M498,426.5h9M30,438.5h4M975,438.5h-4M498,438.5h9M30,449.5h4M975,449.5h-4M498,449.5h9M30,460.5h4M975,460.5h-4M498,460.5h9M30,472.5h7M975,472.5h-7M498,472.5h9M30,483.5h4M975,483.5h-4M498,483.5h9M30,494.5h4M975,494.5h-4M498,494.5h9M30,505.5h4M975,505.5h-4M498,505.5h9M30,516.5h4M975,516.5h-4M498,516.5h9M30,528.5h7M975,528.5h-7M498,528.5h9M30,539.5h4M975,539.5h-4M498,539.5h9M30,550.5h4M975,550.5h-4M498,550.5h9M30,562.5h4M975,562.5h-4M498,562.5h9M30,573.5h4M975,573.5h-4M498,573.5h9M502.5,135V585M30,359.5H975" stroke="#d4d4d4" stroke-width="1" fill="none"/>
<rect x="29" y="134" width="947" height="452" fill="none" stroke="#d4d4d4" stroke-width="2"/>
<path d="M30,150.5 L50,150.5 L51,152 L53,154 L54,154.5 L55,152.5 L56,151.5 L57,153 L58,152 L60,152.5 L61,150.5 L224,150.5 L225,152 L227,154 L228,154.5 L229,152.5 L230,151.5 L231,153 L232,152 L234,152.5 L235,150.5 L397,150.5 L398,152 L400,154 L401,154.5 L402,152.5 L403,151.5 L404,153 L405,152 L407,152.5 L408,150.5 L570,150.5 L571,152 L573,154 L574,154.5 L575,152.5 L576,151.5 L577,153 L578,152 L580,152.5 L581,150.5 L742,150.5 L743,152 L745,154 L746,154.5 L747,152.5 L748,151.5 L749,153 L750,152 L752,152.5 L753,150.5 L912,150.5 L913,152 L915,154 L916,154.5 L917,152.5 L918,151.5 L919,153 L920,152 L922,152.5 L923,150.5 L975,150.5" stroke="#22c4c4" stroke-width="3" fill="none" shape-rendering="crispEdges"/>
<path d="M30,474.5H975" stroke="#68d0d4" stroke-width="1" fill="none"/>
<path d="M30,561.5H975" stroke="#dcdc74" stroke-width="1" fill="none"/>
<path d="M30.0,317.1 L31.0,320.2 L32.0,331.9 L34.0,328.7 L35.0,312.3 L36.0,314.2 L37.0,331.4 L39.0,327.1 L40.0,311.7 L41.0,312.0 L42.0,327.4 L43.0,321.8 L44.0,315.4 L45.0,317.0 L46.0,329.8 L49.0,326.6 L50.0,315.3 L50.5,328.0 L51.5,330.0 L51.5,287.0 L52.5,254.0 L53.5,250.0 L54.5,252.0 L55.5,258.0 L55.5,299.0 L56.5,303.0 L57.0,297.0 L58.0,307.0 L59.0,313.0 L59.0,331.0 L60.0,315.0 L61.0,327.0 L62.0,313.0 L63.0,328.1 L64.0,314.5 L65.0,316.3 L66.0,330.3 L67.0,328.4 L68.0,318.0 L69.0,320.8 L70.0,331.7 L72.0,329.5 L73.0,314.6 L74.0,316.8 L75.0,325.2 L76.0,324.5 L77.0,316.9 L78.0,320.8 L79.0,328.1 L80.0,311.0 L81.0,314.6 L82.0,326.7 L85.0,323.4 L86.0,313.8 L87.0,316.3 L88.0,325.6 L91.0,320.1 L92.0,313.4 L93.0,313.4 L94.0,327.5 L95.0,324.6 L96.0,311.9 L97.0,312.0 L98.0,330.7 L99.0,316.6 L100.0,318.8 L101.0,326.4 L103.0,323.3 L104.0,317.9 L105.0,319.6 L106.0,331.2 L107.0,328.5 L108.0,313.9 L109.0,315.0 L110.0,326.7 L112.0,319.9 L113.0,313.1 L114.0,314.0 L115.0,332.1 L117.0,329.3 L118.0,315.5 L119.0,319.5 L120.0,325.8 L122.0,324.3 L123.0,311.1 L124.0,314.4 L125.0,329.9 L126.0,327.2 L127.0,311.6 L128.0,312.6 L129.0,329.7 L130.0,313.6 L131.0,314.1 L132.0,330.0 L134.0,325.9 L135.0,312.0 L136.0,314.5 L137.0,328.1 L139.0,325.9 L140.0,316.7 L141.0,317.5 L142.0,327.0 L143.0,321.8 L144.0,312.4 L145.0,315.9 L146.0,332.6 L148.0,328.4 L149.0,311.3 L150.0,313.4 L151.0,325.9 L153.0,324.1 L154.0,315.9 L155.0,319.2 L156.0,327.1 L159.0,322.9 L160.0,314.6 L161.0,318.5 L162.0,332.4 L163.0,331.5 L164.0,314.9 L165.0,317.4 L166.0,331.8 L168.0,329.9 L169.0,316.2 L170.0,317.9 L171.0,325.6 L172.0,323.8 L173.0,312.2 L174.0,314.5 L175.0,328.0 L176.0,311.6 L177.0,313.4 L178.0,326.1 L179.0,323.8 L180.0,315.8 L181.0,316.4 L182.0,329.7 L185.0,329.4 L186.0,314.3 L187.0,315.6 L188.0,327.9 L189.0,311.1 L190.0,313.1 L191.0,330.1 L192.0,313.2 L193.0,313.5 L194.0,326.1 L197.0,322.9 L198.0,316.2 L199.0,319.1 L200.0,332.2 L201.0,327.3 L202.0,313.5 L203.0,317.1 L204.0,330.5 L205.0,324.4 L206.0,317.6 L207.0,319.6 L208.0,325.2 L210.0,325.1 L211.0,313.7 L212.0,316.1 L213.0,329.7 L216.0,329.1 L217.0,311.8 L218.0,313.5 L219.0,327.1 L222.0,324.7 L223.0,315.9 L224.0,328.0 L225.0,330.0 L225.0,287.0 L226.0,253.0 L227.0,249.0 L228.0,251.0 L229.0,257.0 L229.0,299.0 L230.0,303.0 L230.5,297.0 L231.5,307.0 L232.5,313.0 L232.5,331.0 L233.5,315.0 L234.5,327.0 L235.5,313.0 L236.0,325.9 L237.0,321.3 L238.0,312.8 L239.0,314.0 L240.0,325.1 L242.0,320.3 L243.0,314.6 L244.0,316.0 L245.0,331.0 L246.0,324.5 L247.0,317.2 L248.0,319.9 L249.0,327.6 L251.0,326.2 L252.0,316.6 L253.0,317.4 L254.0,331.0 L256.0,329.5 L257.0,315.1 L258.0,315.6 L259.0,327.5 L260.0,324.1 L261.0,316.0 L262.0,317.1 L263.0,332.6 L264.0,311.8 L265.0,315.5 L266.0,328.8 L267.0,323.0 L268.0,315.4 L269.0,316.6 L270.0,329.0 L272.0,323.1 L273.0,314.2 L274.0,314.3 L275.0,325.6 L277.0,319.5 L278.0,315.7 L279.0,317.2 L280.0,327.2 L281.0,316.5 L282.0,317.1 L283.0,325.2 L286.0,322.0 L287.0,316.4 L288.0,319.5 L289.0,327.1 L290.0,317.9 L291.0,318.3 L292.0,325.9 L293.0,315.6 L294.0,319.4 L295.0,331.5 L297.0,326.7 L298.0,316.8 L299.0,319.6 L300.0,327.0 L301.0,321.8 L302.0,316.0 L303.0,317.1 L304.0,326.4 L306.0,324.0 L307.0,317.6 L308.0,321.6 L309.0,329.0 L312.0,327.9 L313.0,317.3 L314.0,321.1 L315.0,325.7 L318.0,320.6 L319.0,314.2 L320.0,317.7 L321.0,326.6 L322.0,326.5 L323.0,315.0 L324.0,318.2 L325.0,332.0 L327.0,325.4 L328.0,313.3 L329.0,313.7 L330.0,332.9 L332.0,326.8 L333.0,317.5 L334.0,318.4 L335.0,326.0 L338.0,323.3 L339.0,317.8 L340.0,321.0 L341.0,329.3 L342.0,312.8 L343.0,312.9 L344.0,330.7 L345.0,327.2 L346.0,314.1 L347.0,317.2 L348.0,329.4 L349.0,317.4 L350.0,320.9 L351.0,326.7 L353.0,323.7 L354.0,312.2 L355.0,315.4 L356.0,327.7 L357.0,314.3 L358.0,317.9 L359.0,333.0 L360.0,329.4 L361.0,315.8 L362.0,317.8 L363.0,332.6 L366.0,325.9 L367.0,316.3 L368.0,318.5 L369.0,328.5 L370.0,314.9 L371.0,317.0 L372.0,326.3 L375.0,320.0 L376.0,313.2 L377.0,316.6 L378.0,328.0 L379.0,321.7 L380.0,313.1 L381.0,315.3 L382.0,326.1 L383.0,324.2 L384.0,312.4 L385.0,314.4 L386.0,329.3 L388.0,325.1 L389.0,314.8 L390.0,318.4 L391.0,325.4 L392.0,316.6 L393.0,318.6 L394.0,329.5 L396.0,324.7 L397.0,317.5 L397.5,328.0 L398.5,330.0 L398.5,287.0 L399.5,255.0 L400.5,251.0 L401.5,253.0 L402.5,259.0 L402.5,299.0 L403.5,303.0 L404.0,297.0 L405.0,307.0 L406.0,313.0 L406.0,331.0 L407.0,315.0 L408.0,327.0 L409.0,313.0 L410.0,311.9 L411.0,312.0 L412.0,331.2 L413.0,329.9 L414.0,311.1 L415.0,314.0 L416.0,327.3 L417.0,325.6 L418.0,311.7 L419.0,312.2 L420.0,330.8 L422.0,327.3 L423.0,316.0 L424.0,319.5 L425.0,330.6 L426.0,330.4 L427.0,313.9 L428.0,314.5 L429.0,329.2 L432.0,327.8 L433.0,314.7 L434.0,315.6 L435.0,326.7 L438.0,322.9 L439.0,317.0 L440.0,320.0 L441.0,326.9 L443.0,321.2 L444.0,313.2 L445.0,316.9 L446.0,327.5 L447.0,326.0 L448.0,317.2 L449.0,318.2 L450.0,326.1 L451.0,321.0 L452.0,313.7 L453.0,317.5 L454.0,328.5 L455.0,324.7 L456.0,311.9 L457.0,314.6 L458.0,328.2 L461.0,328.1 L462.0,315.0 L463.0,318.3 L464.0,327.9 L465.0,325.3 L466.0,314.5 L467.0,316.6 L468.0,331.1 L471.0,326.3 L472.0,316.6 L473.0,316.7 L474.0,328.9 L475.0,323.5 L476.0,314.6 L477.0,315.2 L478.0,329.5 L480.0,328.3 L481.0,312.2 L482.0,313.3 L483.0,326.3 L484.0,321.6 L485.0,311.4 L486.0,313.3 L487.0,332.6 L489.0,327.3 L490.0,313.7 L491.0,315.2 L492.0,328.4 L493.0,326.9 L494.0,311.1 L495.0,314.5 L496.0,330.6 L497.0,329.3 L498.0,313.5 L499.0,317.2 L500.0,328.0 L502.0,323.7 L503.0,314.6 L504.0,318.2 L505.0,325.1 L506.0,317.1 L507.0,320.9 L508.0,332.3 L511.0,328.3 L512.0,314.5 L513.0,317.7 L514.0,332.9 L515.0,331.1 L516.0,316.2 L517.0,319.5 L518.0,331.2 L519.0,311.9 L520.0,314.1 L521.0,327.6 L523.0,325.1 L524.0,316.4 L525.0,319.2 L526.0,328.2 L528.0,327.8 L529.0,313.1 L530.0,316.7 L531.0,325.8 L532.0,318.9 L533.0,311.3 L534.0,315.2 L535.0,327.2 L537.0,325.1 L538.0,315.6 L539.0,317.8 L540.0,329.6 L541.0,326.8 L542.0,315.5 L543.0,318.5 L544.0,330.6 L546.0,323.7 L547.0,311.8 L548.0,312.8 L549.0,325.9 L550.0,313.8 L551.0,314.6 L552.0,325.4 L554.0,322.8 L555.0,312.8 L556.0,314.2 L557.0,327.2 L558.0,314.6 L559.0,316.8 L560.0,332.7 L562.0,325.8 L563.0,314.1 L564.0,316.3 L565.0,330.2 L568.0,325.5 L569.0,313.7 L570.0,328.0 L571.0,330.0 L571.0,287.0 L572.0,260.0 L573.0,256.0 L574.0,258.0 L575.0,264.0 L575.0,299.0 L576.0,303.0 L576.5,297.0 L577.5,307.0 L578.5,313.0 L578.5,331.0 L579.5,315.0 L580.5,327.0 L581.5,313.0 L582.0,318.1 L583.0,327.2 L584.0,322.5 L585.0,313.1 L586.0,314.1 L587.0,325.1 L590.0,324.8 L591.0,313.9 L592.0,314.1 L593.0,330.5 L594.0,328.3 L595.0,311.4 L596.0,315.1 L597.0,332.9 L599.0,332.4 L600.0,314.0 L601.0,317.9 L602.0,328.8 L603.0,327.1 L604.0,311.7 L605.0,315.3 L606.0,331.5 L608.0,330.5 L609.0,315.2 L610.0,317.7 L611.0,325.9 L612.0,322.7 L613.0,317.0 L614.0,317.6 L615.0,327.9 L616.0,325.3 L617.0,315.7 L618.0,316.7 L619.0,328.6 L620.0,324.6 L621.0,313.5 L622.0,316.8 L623.0,331.0 L625.0,330.0 L626.0,316.1 L627.0,316.6 L628.0,326.9 L629.0,320.7 L630.0,315.4 L631.0,316.5 L632.0,327.9 L634.0,323.1 L635.0,315.9 L636.0,317.0 L637.0,326.5 L639.0,324.8 L640.0,314.5 L641.0,315.3 L642.0,330.2 L643.0,325.4 L644.0,311.4 L645.0,313.1 L646.0,327.2 L649.0,322.8 L650.0,312.6 L651.0,315.6 L652.0,327.2 L653.0,312.1 L654.0,316.1 L655.0,326.9 L658.0,323.5 L659.0,312.5 L660.0,315.5 L661.0,327.7 L662.0,321.9 L663.0,316.6 L664.0,319.9 L665.0,328.6 L666.0,314.1 L667.0,315.7 L668.0,331.0 L669.0,329.9 L670.0,315.6 L671.0,316.9 L672.0,332.9 L673.0,329.1 L674.0,316.8 L675.0,319.4 L676.0,326.5 L679.0,322.4 L680.0,317.1 L681.0,317.5 L682.0,325.6 L684.0,321.7 L685.0,316.7 L686.0,320.0 L687.0,328.7 L689.0,328.6 L690.0,312.5 L691.0,312.8 L692.0,330.3 L693.0,328.2 L694.0,316.3 L695.0,319.9 L696.0,327.6 L699.0,326.1 L700.0,316.1 L701.0,316.6 L702.0,327.9 L705.0,323.0 L706.0,315.2 L707.0,317.9 L708.0,332.2 L710.0,330.3 L711.0,316.6 L712.0,317.9 L713.0,327.4 L715.0,324.6 L716.0,317.3 L717.0,318.7 L718.0,327.0 L721.0,324.4 L722.0,315.7 L723.0,318.9 L724.0,329.7 L725.0,324.5 L726.0,316.6 L727.0,319.9 L728.0,329.3 L729.0,325.4 L730.0,311.6 L731.0,315.0 L732.0,328.6 L733.0,323.0 L734.0,314.6 L735.0,316.9 L736.0,329.4 L737.0,322.6 L738.0,316.9 L739.0,319.2 L740.0,328.4 L742.0,328.0 L743.0,330.0 L743.0,287.0 L744.0,253.0 L745.0,249.0 L746.0,251.0 L747.0,257.0 L747.0,299.0 L748.0,303.0 L748.5,297.0 L749.5,307.0 L750.5,313.0 L750.5,331.0 L751.5,315.0 L752.5,327.0 L753.5,313.0 L754.0,330.7 L757.0,324.3 L758.0,316.4 L759.0,317.7 L760.0,328.2 L761.0,321.4 L762.0,312.0 L763.0,315.2 L764.0,328.9 L767.0,328.4 L768.0,317.4 L769.0,320.7 L770.0,328.3 L772.0,323.6 L773.0,316.6 L774.0,320.2 L775.0,331.7 L776.0,315.5 L777.0,318.3 L778.0,329.2 L780.0,323.6 L781.0,317.5 L782.0,318.4 L783.0,332.3 L785.0,331.2 L786.0,313.6 L787.0,314.4 L788.0,326.3 L791.0,323.4 L792.0,312.9 L793.0,314.8 L794.0,332.1 L795.0,327.0 L796.0,315.5 L797.0,316.3 L798.0,331.2 L799.0,330.8 L800.0,311.1 L801.0,314.3 L802.0,328.8 L804.0,326.7 L805.0,312.3 L806.0,313.2 L807.0,326.7 L808.0,321.7 L809.0,314.6 L810.0,318.1 L811.0,328.5 L813.0,325.7 L814.0,315.4 L815.0,317.6 L816.0,332.5 L817.0,326.6 L818.0,317.2 L819.0,318.6 L820.0,332.3 L822.0,328.5 L823.0,314.4 L824.0,314.6 L825.0,326.8 L826.0,316.6 L827.0,318.7 L828.0,328.1 L829.0,324.5 L830.0,316.5 L831.0,320.2 L832.0,325.5 L833.0,319.2 L834.0,317.3 L835.0,318.3 L836.0,328.6 L838.0,325.7 L839.0,313.9 L840.0,314.5 L841.0,331.2 L842.0,324.8 L843.0,311.9 L844.0,314.4 L845.0,330.9 L847.0,327.3 L848.0,312.1 L849.0,312.1 L850.0,331.2 L851.0,316.8 L852.0,317.8 L853.0,325.7 L854.0,320.6 L855.0,317.2 L856.0,317.6 L857.0,330.5 L858.0,315.1 L859.0,316.3 L860.0,331.9 L863.0,326.3 L864.0,312.4 L865.0,315.5 L866.0,330.5 L868.0,327.4 L869.0,314.8 L870.0,315.4 L871.0,329.2 L872.0,313.2 L873.0,315.4 L874.0,328.2 L875.0,321.3 L876.0,316.0 L877.0,318.8 L878.0,327.9 L881.0,327.1 L882.0,315.7 L883.0,318.9 L884.0,331.0 L886.0,330.1 L887.0,311.1 L888.0,313.9 L889.0,328.0 L891.0,326.4 L892.0,311.8 L893.0,315.2 L894.0,331.2 L896.0,325.3 L897.0,312.4 L898.0,313.6 L899.0,329.9 L902.0,327.3 L903.0,316.2 L904.0,319.3 L905.0,332.6 L907.0,328.7 L908.0,312.8 L909.0,315.7 L910.0,326.6 L911.0,313.2 L912.0,315.0 L912.5,328.0 L913.5,330.0 L913.5,287.0 L914.5,256.0 L915.5,252.0 L916.5,254.0 L917.5,260.0 L917.5,299.0 L918.5,303.0 L919.0,297.0 L920.0,307.0 L921.0,313.0 L921.0,331.0 L922.0,315.0 L923.0,327.0 L924.0,313.0 L925.0,326.2 L926.0,315.1 L927.0,316.1 L928.0,325.7 L930.0,324.6 L931.0,314.0 L932.0,315.4 L933.0,331.2 L934.0,317.5 L935.0,318.3 L936.0,326.1 L938.0,325.1 L939.0,313.7 L940.0,315.4 L941.0,327.7 L944.0,327.5 L945.0,315.3 L946.0,318.4 L947.0,327.5 L949.0,325.8 L950.0,314.7 L951.0,315.5 L952.0,327.1 L954.0,324.9 L955.0,311.7 L956.0,313.8 L957.0,328.0 L959.0,322.5 L960.0,315.3 L961.0,318.3 L962.0,326.3 L963.0,314.8 L964.0,316.8 L965.0,327.8 L966.0,326.8 L967.0,312.4 L968.0,316.4 L969.0,332.5 L972.0,327.5 L973.0,315.0 L974.0,317.6 L975.0,325.2 L976.0,319.8" stroke="#d8d440" stroke-width="1.1" fill="none"/>
<!-- markers -->
<path d="M10,242.5H23L27,248.5L23,254.5H10Z" fill="#1cc0c0"/>
<path d="M10,343H23L27,348.5L23,354H10Z" fill="#e8e820"/>
<path d="M10,468H22L27,473.5L22,479H10Z" fill="#10e8e8"/>
<path d="M10,555.5H22L27,561L22,566.5H10Z" fill="#ffff10"/>
<path d="M995,522.5H982L978,528.5L982,534.5H995Z" fill="#ffff10"/>
<path d="M497,117.5H508V128.5L502.5,133L497,128.5Z" fill="#ff8c10" stroke="#b05a00" stroke-width="0.6"/>
<g font-family="Liberation Sans" font-size="10" fill="#101010">
<text x="11" y="252">A2</text><text x="11" y="352.5">A1</text>
</g>
<g font-family="Liberation Sans" font-weight="bold" font-size="10" fill="#101010">
<text x="15" y="477.5">2</text><text x="15" y="565">1</text>
</g>
<path d="M983.5,525.5h7M987,525.5v7" stroke="#202020" stroke-width="1.4"/>
<path d="M499.5,120.5h6M502.5,120.5v7" stroke="#301800" stroke-width="1.4"/>
</svg>

<!-- bottom info -->
<div class="a" style="left:29px;top:590px;width:92px;height:19px;background:#000"></div>
<div class="a" style="left:30px;top:592px;width:27px;height:15px;background:#ffff00"></div>
<div class="t" style="left:31px;top:593.6px;font-size:12.5px;color:#111">CH1</div>
<svg class="a" style="left:58px;top:596px" width="12" height="8"><path d="M1,1.5h1.2M3,1.5h1.2M5,1.5h1.2M7,1.5h1.2M9,1.5h1.2" stroke="#e4e060" stroke-width="1"/><path d="M1,6.5h10" stroke="#e4e060" stroke-width="1"/></svg>
<div class="t" style="left:79px;top:593.6px;font-size:12.5px;letter-spacing:-0.25px;color:#e4d860">10.0A</div>
<div class="a" style="left:139px;top:590px;width:92px;height:19px;background:#000"></div>
<div class="t" style="left:141px;top:593.6px;font-size:12.5px;color:#38c8d0">CH2</div>
<svg class="a" style="left:168px;top:596px" width="12" height="8"><path d="M1,1.5h1.2M3,1.5h1.2M5,1.5h1.2M7,1.5h1.2M9,1.5h1.2" stroke="#38c8d0" stroke-width="1"/><path d="M1,6.5h10" stroke="#38c8d0" stroke-width="1"/></svg>
<div class="t" style="left:188px;top:593.6px;font-size:12.5px;letter-spacing:-0.25px;color:#38c8d0">5.00V</div>
<div class="a" style="left:885px;top:590px;width:90px;height:19px;background:#000"></div>
<div class="t" style="left:887.5px;top:593.6px;font-size:12.5px;color:#e8862c">Time:20.00ms</div>

<!-- right panel -->
<div class="a" style="left:996px;top:88px;width:2px;height:524px;background:#fafafa"></div>
<div class="a" style="left:998px;top:87px;width:192px;height:1px;background:#a0a0a0"></div>
<div class="a" style="left:998px;top:87px;width:1px;height:525px;background:#a0a0a0"></div>
<div class="a" style="left:999px;top:88px;width:191px;height:29px;background:#f0f0f0"></div>
<div class="a" style="left:998px;top:117px;width:192px;height:1px;background:#a0a0a0"></div>
<div class="a" style="left:999px;top:118px;width:191px;height:1px;background:#ffffff"></div>
<div class="p" style="left:1009.5px;top:97.7px">Connect:</div>
<div class="a" style="left:1056px;top:93px;width:22px;height:22px;border-radius:50%;background:#a2a2a2;border:1px solid #6a6a6a"></div>

<!-- group boxes -->
<div class="a" style="left:1005px;top:130px;width:166px;height:110px;border:1px solid #d5d5d5;border-radius:3px;box-shadow:inset 1px 1px 0 #fff"></div>
<div class="a" style="left:1011px;top:122px;width:53px;height:14px;background:#f0f0f0"></div>
<div class="p" style="left:1013.5px;top:123.5px">Horizontal</div>
<div class="p" style="left:1008px;top:144.6px">Time / DIV</div>
<div class="cb" style="left:1007px;top:162px;width:68px"><span style="top:5.3px">20.00ms</span><i></i></div>
<div class="p" style="left:1008px;top:191.6px">Format</div>
<div class="cb" style="left:1007px;top:211.5px;width:68px"><span style="top:5.3px">Y - T</span><i></i></div>

<div class="a" style="left:1005px;top:254px;width:166px;height:150px;border:1px solid #d5d5d5;border-radius:3px;box-shadow:inset 1px 1px 0 #fff"></div>
<div class="a" style="left:1011px;top:246px;width:41px;height:14px;background:#f0f0f0"></div>
<div class="p" style="left:1013.5px;top:247.7px">Vertical</div>
<div class="cb" style="left:1010px;top:262.5px;width:68px"><span style="top:5.3px">CH1</span><i></i></div>
<div class="a" style="left:1080px;top:272px;width:13px;height:13px;border:1px solid #8e8f8f;background:linear-gradient(135deg,#dcdcdc,#fafafa)"></div>
<svg class="a" style="left:1080px;top:272px" width="13" height="13"><path d="M3,6.5L5.5,10L10,2.5" stroke="#3a58a8" stroke-width="1.7" fill="none"/></svg>
<div class="p" style="left:1096px;top:273.5px">ON/OFF</div>
<div class="a" style="left:1010.5px;top:290px;width:67px;height:20.5px;border:1px solid #d8d8d8;background:#f4f4f4"></div>
<div class="p" style="left:1014.5px;top:294.5px">10.0A</div>
<div class="a" style="left:1061px;top:291.5px;width:15px;height:8px;border:1px solid #d0d0d0;background:linear-gradient(#f8f8f8,#e8e8e8)"></div>
<div class="a" style="left:1061px;top:301px;width:15px;height:8px;border:1px solid #d0d0d0;background:linear-gradient(#f8f8f8,#e8e8e8)"></div>
<svg class="a" style="left:1061px;top:291px" width="15" height="19"><path d="M4.5,6.5L7.5,3.5L10.5,6.5Z" fill="#5070a8"/><path d="M4.5,13L7.5,16L10.5,13Z" fill="#5070a8"/></svg>
<div class="cb" style="left:1010px;top:320px;width:68px"><span style="top:5.3px">DC</span><i></i></div>
<div class="cb" style="left:1010px;top:347px;width:68px"><span style="top:5.3px">CC65(1m</span><i></i></div>

<div class="a" style="left:1005px;top:417px;width:166px;height:205px;border:1px solid #d5d5d5;border-radius:3px;box-shadow:inset 1px 1px 0 #fff"></div>
<div class="a" style="left:1011px;top:409px;width:38px;height:14px;background:#f0f0f0"></div>
<div class="p" style="left:1013.5px;top:411.5px">Trigger</div>
<div class="p" style="left:1016px;top:435.4px">Trigger Mode</div>
<div class="p" style="left:1016px;top:463.4px">Trigger Sweep</div>
<div class="p" style="left:1016px;top:491.4px">Trigger Source</div>
<div class="p" style="left:1016px;top:519.4px">Trigger Slope</div>
<div class="cb" style="left:1097px;top:428.5px;width:67.5px"><span>Edge</span><i></i></div>
<div class="cb" style="left:1097px;top:456.5px;width:67.5px"><span>AUTO</span><i></i></div>
<div class="cb" style="left:1097px;top:484.5px;width:67.5px"><span>CH1</span><i></i></div>
<div class="cb" style="left:1097px;top:512.5px;width:67.5px"><span>+</span><i></i></div>

<!-- knobs -->
<svg class="a" style="left:1080px;top:140px" width="90" height="240">
<defs>
<linearGradient id="kr" x1="0.2" y1="0" x2="0.6" y2="1"><stop offset="0" stop-color="#c8c8c8"/><stop offset="0.5" stop-color="#acacac"/><stop offset="1" stop-color="#8c8c8c"/></linearGradient>
</defs>
<g transform="translate(44,44.5)">
<path d="M-26.5,26.5A37.5,37.5 0 1 1 26.5,26.5" fill="none" stroke="#1a1a1a" stroke-width="1.3"/>
<path d="M-24.5,24.5L-31.5,31.5M24.5,24.5L31.5,31.5" stroke="#1a1a1a" stroke-width="1.6"/>
<circle r="36" fill="none" stroke="#fff" stroke-width="1.6"/><circle r="34.5" fill="url(#kr)" stroke="#707070" stroke-width="0.8"/>
<circle r="29" fill="#0000c4" stroke="#000070" stroke-width="1.2"/>
<path d="M-11,-20.3L-3.2,-6.2" stroke="#d4d4d4" stroke-width="2"/>
</g>
<g transform="translate(44,195)">
<path d="M-26.5,26.5A37.5,37.5 0 1 1 26.5,26.5" fill="none" stroke="#1a1a1a" stroke-width="1.3"/>
<path d="M-24.5,24.5L-31.5,31.5M24.5,24.5L31.5,31.5" stroke="#1a1a1a" stroke-width="1.6"/>
<circle r="36" fill="none" stroke="#fff" stroke-width="1.6"/><circle r="34.5" fill="url(#kr)" stroke="#707070" stroke-width="0.8"/>
<circle r="28.5" fill="#ffff00" stroke="#7a7a00" stroke-width="2"/>
<path d="M5.5,-23L1.7,-7.8" stroke="#404060" stroke-width="2"/>
</g>
</svg>


<!-- scrollbar -->
<div class="a" style="left:1177px;top:118px;width:13px;height:494px;background:#eaeaea;border-left:1px solid #f8f8f8"></div>
<svg class="a" style="left:1178px;top:118px" width="13" height="16"><path d="M3.5,11.5L7,8L10.5,11.5Z" fill="#303030"/></svg>
<div class="a" style="left:1177px;top:136px;width:13px;height:270px;border:1px solid #9a9a9a;border-radius:2px;background:linear-gradient(90deg,#f2f2f2,#e6e6e6 60%,#d4d4d4)"></div>
<svg class="a" style="left:1177px;top:266px" width="13" height="10"><path d="M3.5,1.5h6M3.5,4.5h6M3.5,7.5h6" stroke="#606060" stroke-width="1"/></svg>
<!-- panel bottom edge -->
<div class="a" style="left:996px;top:612px;width:194px;height:2px;background:#f8f8f8"></div>

<!-- status bar -->
<div class="a" style="left:6px;top:612px;width:1184px;height:2px;background:#f8f8f8"></div>
<div class="a" style="left:6px;top:614px;width:1184px;height:1px;background:#a0a0a0"></div>
<div class="a" style="left:6px;top:615px;width:1184px;height:1px;background:#fbfbfb"></div>
<div class="a" style="left:6px;top:616px;width:1184px;height:16px;background:linear-gradient(#eeeeec,#efecea)"></div>
<div class="a" style="left:6px;top:632px;width:1184px;height:1px;background:#fcfcfc"></div>
<div class="a" style="left:949px;top:615px;width:1px;height:17px;background:#d4d2d0"></div>
<div class="t" style="left:8px;top:618.5px;font-size:12px;letter-spacing:0.2px;color:#111">Searching Device...</div>
<div class="t" style="left:954.5px;top:618.5px;font-size:12px;letter-spacing:0.2px;color:#111">0.00 mSa</div>
<div class="t" style="left:1063px;top:618.5px;font-size:12px;letter-spacing:0.25px;color:#111">31-12-2012</div>
<div class="t" style="left:1135.5px;top:618.5px;font-size:12px;letter-spacing:0.2px;color:#111">14:19</div>
<svg class="a" style="left:1178px;top:620px" width="12" height="12"><g fill="#b8b8b8"><rect x="8" y="2" width="2" height="2"/><rect x="5" y="5" width="2" height="2"/><rect x="8" y="5" width="2" height="2"/><rect x="2" y="8" width="2" height="2"/><rect x="5" y="8" width="2" height="2"/><rect x="8" y="8" width="2" height="2"/></g></svg>
</body></html>
